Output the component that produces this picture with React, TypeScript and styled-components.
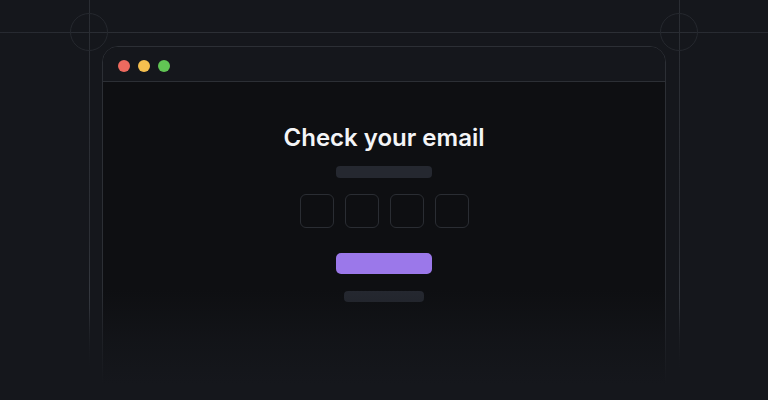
import React from "react";
import styled, { createGlobalStyle } from "styled-components";

const Global = createGlobalStyle`
  html, body { margin: 0; padding: 0; background: #15171c; }
  body { font-family: Inter, "Noto Sans", sans-serif; }
`;

const Stage = styled.div`
  position: relative;
  width: 768px;
  height: 400px;
  overflow: hidden;
  background: #15171c;
  padding-top: 46px;
  box-sizing: border-box;
  display: flex;
  justify-content: center;
`;

const HLine = styled.div`
  position: absolute;
  left: 0;
  right: 0;
  top: 32px;
  height: 1px;
  background: linear-gradient(90deg, #262930 0%, #2c2f35 20%, #2c2f35 80%, #262930 100%);
`;

const VLine = styled.div<{ $x: number }>`
  position: absolute;
  top: 0;
  left: ${(p) => p.$x}px;
  width: 1px;
  height: 400px;
  background: linear-gradient(
    180deg,
    #2a2d33 0%,
    #2c2f35 60%,
    #383c43 77%,
    rgba(56, 60, 67, 0.3) 87%,
    rgba(21, 23, 28, 0) 92%
  );
`;

const Ring = styled.div<{ $x: number }>`
  position: absolute;
  top: ${32 - 19}px;
  left: ${(p) => p.$x - 19}px;
  width: 36px;
  height: 36px;
  border: 1.5px solid #25282e;
  border-radius: 50%;
`;

const Window = styled.div`
  position: relative;
  width: 564px;
  height: 400px;
  box-sizing: border-box;
  border: 1.5px solid #2c2f35;
  border-radius: 16px;
  background: #0e0f12;
  display: flex;
  flex-direction: column;
  overflow: hidden;
`;

const TitleBar = styled.div`
  height: 35px;
  flex: none;
  box-sizing: border-box;
  background: #15171c;
  border-bottom: 1.5px solid #2c2f35;
  display: flex;
  align-items: center;
  gap: 8px;
  padding: 4px 0 0 15px;
`;

const Dot = styled.span<{ $c: string }>`
  width: 12px;
  height: 12px;
  border-radius: 50%;
  background: ${(p) => p.$c};
`;

const Content = styled.div`
  flex: 1;
  display: flex;
  flex-direction: column;
  align-items: center;
  padding-top: 40px;
`;

const Title = styled.h1`
  margin: 0;
  font-family: Inter, "Noto Sans", sans-serif;
  font-size: 24px;
  line-height: 32px;
  font-weight: 600;
  color: #f4f5f7;
`;

const Bar = styled.div<{ $w: number; $h: number; $mt: number }>`
  width: ${(p) => p.$w}px;
  height: ${(p) => p.$h}px;
  margin-top: ${(p) => p.$mt}px;
  border-radius: 4px;
  background: #252830;
`;

const Codes = styled.div`
  display: flex;
  gap: 11px;
  margin-top: 16px;
`;

const CodeBox = styled.div`
  width: 34px;
  height: 34px;
  box-sizing: border-box;
  border: 1.5px solid #2a2d33;
  border-radius: 6px;
`;

const Button = styled.div`
  width: 96px;
  height: 21px;
  margin-top: 25px;
  border-radius: 5px;
  background: #9b78ea;
`;

const Fade = styled.div`
  position: absolute;
  left: 0;
  right: 0;
  bottom: 0;
  height: 110px;
  background: linear-gradient(180deg, rgba(21, 23, 28, 0) 0%, rgba(21, 23, 28, 0.6) 45%, #15171c 85%);
  pointer-events: none;
`;

export default function App() {
  return (
    <>
      <Global />
      <Stage>
        <HLine />
        <VLine $x={89} />
        <VLine $x={679} />
        <Ring $x={89} />
        <Ring $x={679} />
        <Window>
          <TitleBar>
            <Dot $c="#ee6a5f" />
            <Dot $c="#f5bf4f" />
            <Dot $c="#61c554" />
          </TitleBar>
          <Content>
            <Title>Check your email</Title>
            <Bar $w={96} $h={12} $mt={12} />
            <Codes>
              <CodeBox />
              <CodeBox />
              <CodeBox />
              <CodeBox />
            </Codes>
            <Button />
            <Bar $w={80} $h={11} $mt={17} />
          </Content>
        </Window>
        <Fade />
      </Stage>
    </>
  );
}
